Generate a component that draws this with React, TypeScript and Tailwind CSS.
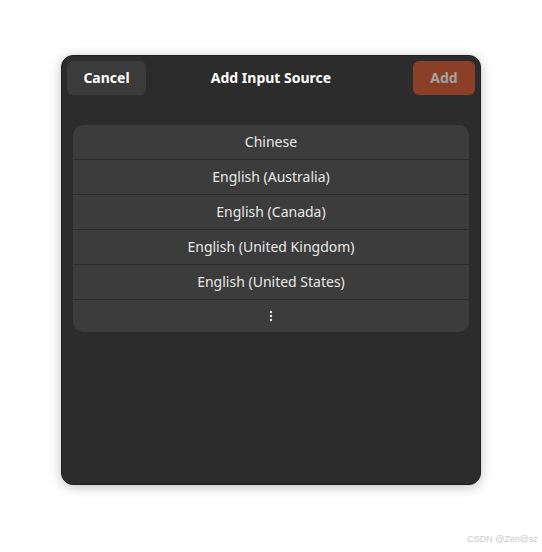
import React from 'react';

const LANGUAGES = [
  'Chinese',
  'English (Australia)',
  'English (Canada)',
  'English (United Kingdom)',
  'English (United States)',
];

const App: React.FC = () => {
  return (
    <div
      className="relative w-[542px] h-[552px] bg-white flex items-start justify-center pt-[55px]"
      style={{ fontFamily: '"Noto Sans", "Open Sans", sans-serif' }}
    >
      {/* Dialog */}
      <div className="w-[420px] h-[430px] bg-[#2c2c2c] rounded-[12px] shadow-[0_2px_12px_rgba(0,0,0,0.25)] border border-[#1f1f1f] flex flex-col">
        {/* Header */}
        <div className="grid grid-cols-[1fr_auto_1fr] items-center px-[5px] pt-[5px]">
          <div className="flex justify-start">
            <button className="w-[79px] h-[34px] pb-[2px] rounded-[6px] bg-[#3b3b3b] text-white text-[14px] font-bold">
              Cancel
            </button>
          </div>
          <div className="text-white text-[14px] font-bold pb-[2px]">Add Input Source</div>
          <div className="flex justify-end">
            <button className="w-[62px] h-[34px] pb-[2px] rounded-[6px] bg-[#8b3f27] text-[#a3a3a3] text-[14px] font-bold">
              Add
            </button>
          </div>
        </div>

        {/* List */}
        <div className="mx-[11px] mt-[30px] rounded-[10px] bg-[#3c3c3c] overflow-hidden">
          {LANGUAGES.map((lang) => (
            <div
              key={lang}
              className="h-[35px] pb-[2px] flex items-center justify-center border-b border-[#2a2a2a] text-[#e8e8e8] text-[14px]"
            >
              {lang}
            </div>
          ))}
          <div className="h-[32px] flex items-center justify-center">
            <svg width="4" height="12" viewBox="0 0 4 12">
              <circle cx="2" cy="2" r="1.2" fill="#e8e8e8" />
              <circle cx="2" cy="6" r="1.2" fill="#e8e8e8" />
              <circle cx="2" cy="10" r="1.2" fill="#e8e8e8" />
            </svg>
          </div>
        </div>
      </div>

      {/* Watermark */}
      <div
        className="absolute right-[4px] bottom-[6px] text-[9px] text-[#c8c8c8]"
        style={{ fontFamily: '"Liberation Sans", sans-serif' }}
      >
        CSDN @Zen@sz
      </div>
    </div>
  );
};

export default App;
